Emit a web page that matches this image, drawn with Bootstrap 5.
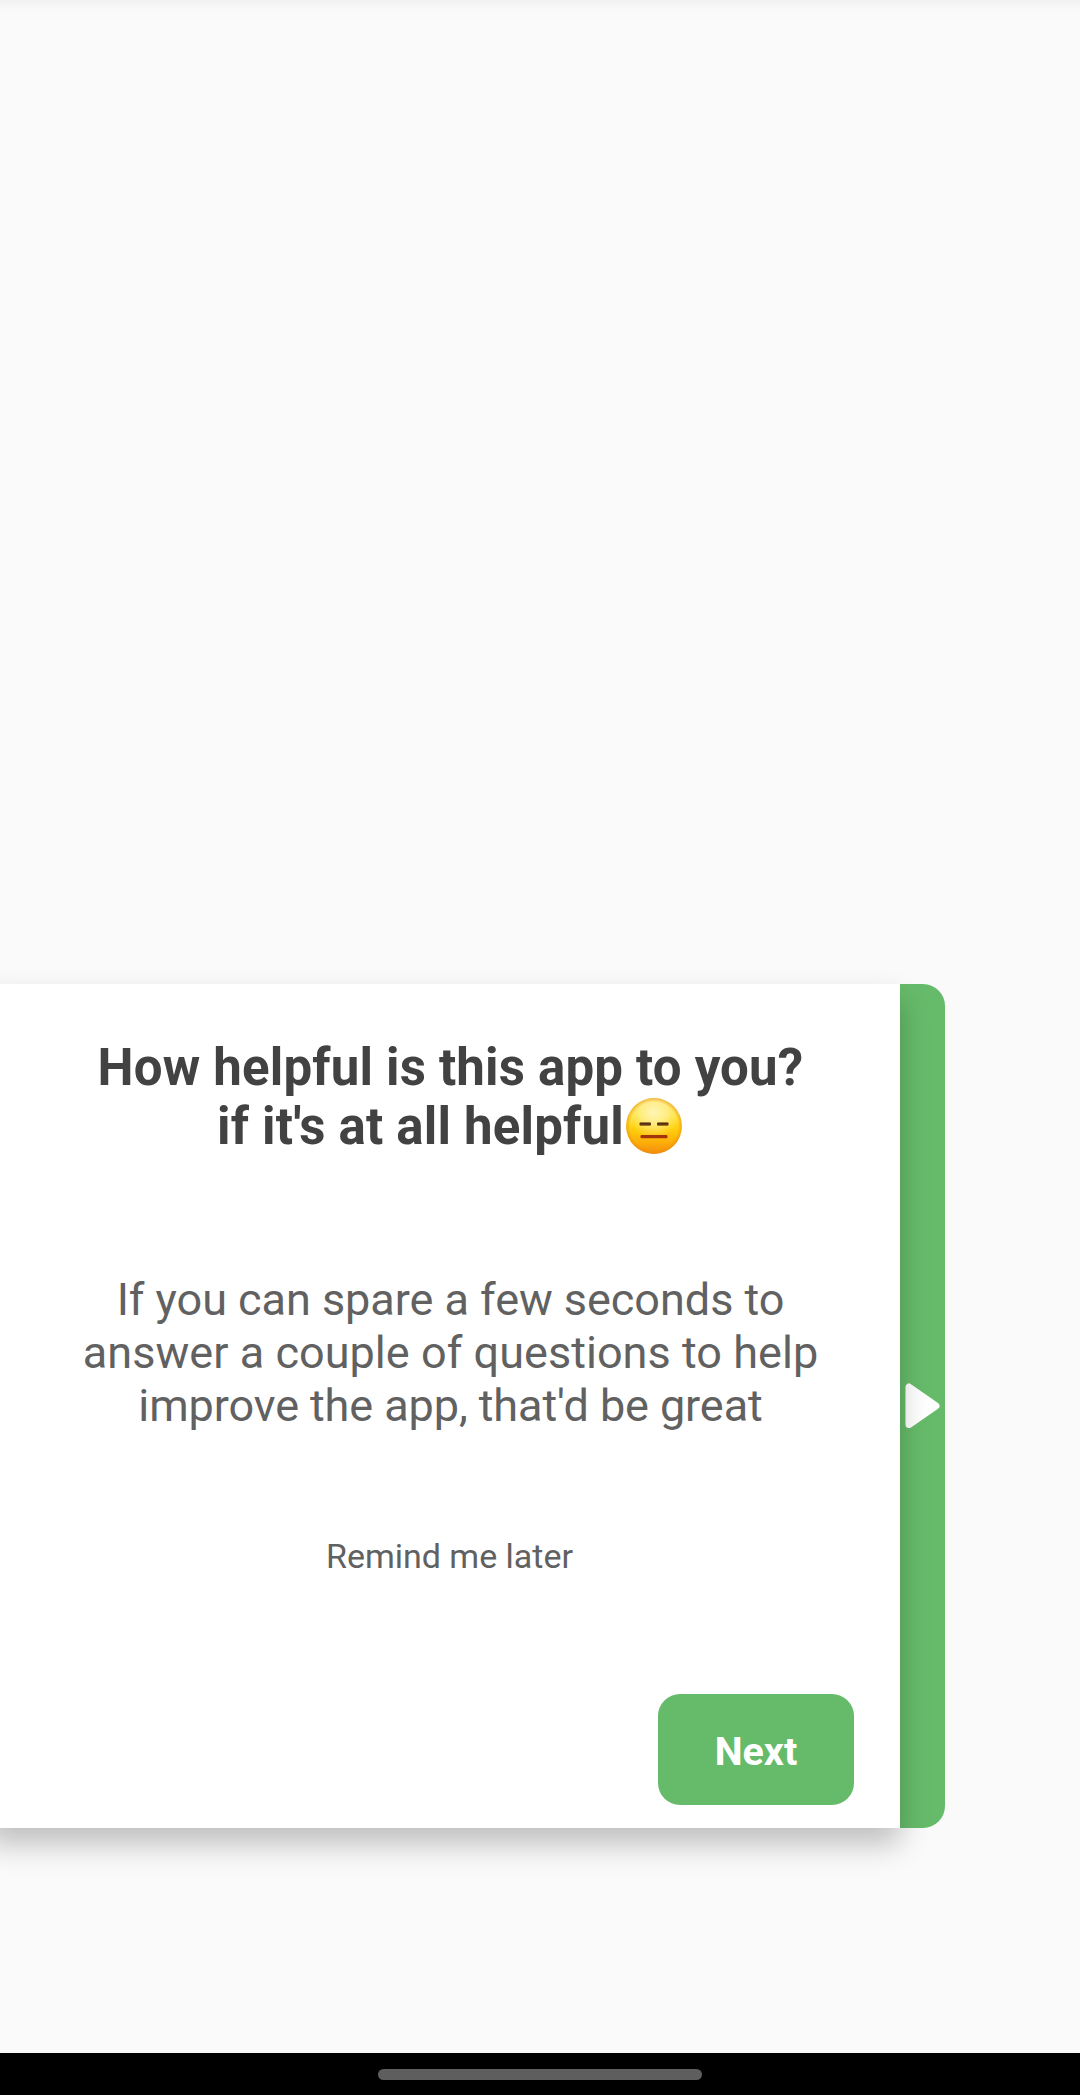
<!DOCTYPE html>
<html lang="en">
<head>
<meta charset="utf-8">
<meta name="viewport" content="width=device-width, initial-scale=1">
<title>Feedback</title>
<link href="https://cdn.jsdelivr.net/npm/bootstrap@5.3.0/dist/css/bootstrap.min.css" rel="stylesheet">
<style>
body{font-family:Roboto,sans-serif;background:#fafafa}
.screen{height:2095px}
.top-shade{height:10px;margin-bottom:974px;background:linear-gradient(#f1f1f1,#fafafa)}
.survey{height:844px}
.survey-panel{width:914px;margin-left:-14px;padding:54px 0 0 15px;z-index:1;box-shadow:0 16px 28px rgba(0,0,0,.24)}
.survey-title{font-size:51px;letter-spacing:.18px;line-height:59px;color:#424242;white-space:nowrap}
.survey-text{margin-top:117px;font-size:45px;letter-spacing:-.04px;line-height:53px;color:#616161;white-space:nowrap}
.line-loose{letter-spacing:.04px}
.line-tight{letter-spacing:-.09px}
.remind{margin-top:104px;margin-right:2px;font-size:34px;letter-spacing:-.02px;line-height:40px;color:#616161}
.btn-next{width:196px;height:111px;margin:0 46px 23px 0;border:0;border-radius:22px;padding:4px 0 0;background:#66bb6a;color:#fff;font-size:39.5px;line-height:46px}
.btn-next:hover{background:#5cb060;color:#fff}
.handle{width:45px;padding-left:5px;background:#66bb6a;border-radius:0 22px 22px 0}
.emoji{width:56px;height:56px;margin:0 2px 0 2px;vertical-align:-10px}
.sysbar{height:42px;padding-top:16px}
.pill{width:324px;height:11px;background:#5e5e5e}
</style>
</head>
<body>
<div class="screen d-flex flex-column overflow-hidden">
  <div class="top-shade flex-shrink-0"></div>
  <main class="survey d-flex flex-shrink-0">
    <section class="survey-panel bg-white d-flex flex-column text-center position-relative flex-shrink-0">
      <h1 class="survey-title fw-bold mb-0">How helpful is this app to you?<br>if it's at all helpful<svg class="emoji" viewBox="0 0 56 56" role="img" aria-label="Expressionless face">
          <defs>
            <linearGradient id="face" x1="0" y1="0" x2="0" y2="1"><stop offset="0" stop-color="#fbdf60"/><stop offset=".3" stop-color="#fee44a"/><stop offset=".55" stop-color="#ffcf0e"/><stop offset=".8" stop-color="#fdad08"/><stop offset="1" stop-color="#f28c10"/></linearGradient>
            <radialGradient id="glow" cx=".5" cy=".26" r=".48"><stop offset="0" stop-color="#fff6bc" stop-opacity=".95"/><stop offset=".5" stop-color="#fff3a0" stop-opacity=".65"/><stop offset="1" stop-color="#ffe850" stop-opacity="0"/></radialGradient>
            <radialGradient id="rim" cx=".5" cy=".5" r=".5"><stop offset=".85" stop-color="#ef9300" stop-opacity="0"/><stop offset="1" stop-color="#e68a10" stop-opacity=".55"/></radialGradient>
            <linearGradient id="eye" x1="0" y1="0" x2="0" y2="1"><stop offset="0" stop-color="#3d1d08"/><stop offset="1" stop-color="#885018"/></linearGradient>
          </defs>
          <circle cx="28" cy="28" r="27.9" fill="url(#face)"/>
          <circle cx="28" cy="28" r="27.9" fill="url(#glow)"/>
          <circle cx="28" cy="28" r="27.9" fill="url(#rim)"/>
          <rect x="13.5" y="24.6" width="11.5" height="3.2" rx="1" fill="url(#eye)"/>
          <rect x="31" y="24.6" width="11.5" height="3.2" rx="1" fill="url(#eye)"/>
          <rect x="14.5" y="37" width="27" height="3.2" rx="1.2" fill="#a4330b"/>
        </svg></h1>
      <p class="survey-text mb-0">If you can spare a few seconds to<br><span class="line-loose">answer a couple of questions to help</span><br><span class="line-tight">improve the app, that'd be great</span></p>
      <a class="remind text-decoration-none align-self-center" href="#">Remind me later</a>
      <button type="button" class="btn btn-next fw-bold mt-auto align-self-end">Next</button>
    </section>
    <div class="handle d-flex align-items-center flex-shrink-0">
      <svg width="36" height="46" viewBox="0 0 36 46" aria-hidden="true"><path d="M4 4v37.6l27-18.8z" fill="#fff" stroke="#fff" stroke-width="7" stroke-linejoin="round"/></svg>
    </div>
  </main>
  <footer class="sysbar bg-black mt-auto d-flex justify-content-center flex-shrink-0">
    <div class="pill rounded-pill"></div>
  </footer>
</div>
<script src="https://cdn.jsdelivr.net/npm/bootstrap@5.3.0/dist/js/bootstrap.bundle.min.js"></script>
</body>
</html>
